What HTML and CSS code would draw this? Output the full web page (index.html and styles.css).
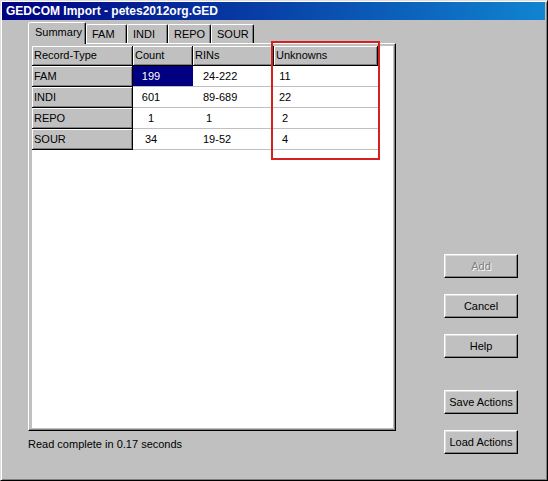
FILE: index.html
```html
<!DOCTYPE html>
<html>
  <head>
    <title>GEDCOM Import</title>
    <meta charset="utf-8" />
    <link rel="stylesheet" href="styles.css">
  </head>

  <body>
    <div class="window">
      <div class="titlebar">GEDCOM Import - petes2012org.GED</div>

      <div class="content">
        <div class="main">
          <!-- tab strip -->
          <div class="tabs">
            <div class="tab active">Summary</div>
            <div class="tab w41">FAM</div>
            <div class="tab w41">INDI</div>
            <div class="tab w43">REPO</div>
            <div class="tab w43">SOUR</div>
          </div>

          <div class="panel">
            <div class="grid">
              <div class="fixed">Record-Type</div>
              <div class="fixed">Count</div>
              <div class="fixed">RINs</div>
              <div class="fixed">Unknowns</div>

              <div class="fixed row">FAM</div>
              <div class="cell count selected"><span>199</span></div>
              <div class="cell rins">24-222</div>
              <div class="cell unk"><span>11</span></div>

              <div class="fixed row">INDI</div>
              <div class="cell count"><span>601</span></div>
              <div class="cell rins">89-689</div>
              <div class="cell unk"><span>22</span></div>

              <div class="fixed row">REPO</div>
              <div class="cell count"><span>1</span></div>
              <div class="cell rins">&nbsp;1</div>
              <div class="cell unk"><span>2</span></div>

              <div class="fixed row">SOUR</div>
              <div class="cell count"><span>34</span></div>
              <div class="cell rins">19-52</div>
              <div class="cell unk"><span>4</span></div>
            </div>
          </div>

          <div class="status">Read complete in 0.17 seconds</div>
        </div>

        <div class="buttons">
          <button disabled>Add</button>
          <button>Cancel</button>
          <button>Help</button>
          <button class="gap">Save Actions</button>
          <button>Load Actions</button>
        </div>
      </div>

      <!-- annotation over the Unknowns column -->
      <div class="highlight"></div>
    </div>
  </body>
</html>
```

FILE: styles.css
```css
body {
  margin: 0;
  font-family: 'Liberation Sans', Arial, sans-serif;
  font-size: 11px;
  color: #000;
  background: #c0c0c0;
}
.window {
  position: relative;
  box-sizing: border-box;
  width: 548px;
  height: 481px;
  background: #c0c0c0;
  border: 1px solid;
  border-color: #dfdfdf #000 #000 #dfdfdf;
  box-shadow: inset 1px 1px #fff, inset -1px -1px #808080;
  padding: 1px 2px 0 1px;
}
.titlebar {
  height: 18px;
  line-height: 19px;
  padding-left: 4px;
  background: linear-gradient(to right, #000080, #1084d0);
  color: #fff;
  font-size: 12px;
  font-weight: bold;
  white-space: nowrap;
}
.content {
  display: flex;
  padding: 2px 0 0 26px;
}
.main {
  width: 368px;
}
.tabs {
  display: flex;
  align-items: flex-end;
  height: 21px;
  position: relative;
  z-index: 1;
}
.tab {
  box-sizing: border-box;
  height: 19px;
  line-height: 18px;
  padding-left: 5px;
  border-top: 1px solid #fff;
  border-left: 1px solid #fff;
  border-right: 1px solid #000;
  border-top-left-radius: 2px;
  border-top-right-radius: 2px;
  box-shadow: inset -1px 0 #808080;
}
.tab.active {
  width: 58px;
  height: 22px;
  margin-bottom: -1px;
  padding-left: 6px;
  line-height: 19px;
  background: #c0c0c0;
}
.w41 { width: 41px; }
.w43 { width: 43px; }
.panel {
  box-sizing: border-box;
  height: 388px;
  border-top: 1px solid #fff;
  border-left: 1px solid #fff;
  border-right: 1px solid #000;
  border-bottom: 1px solid #000;
  box-shadow: inset -1px -1px #808080;
  padding: 2px 2px 2px 3px;
}
.grid {
  display: grid;
  grid-template-columns: 101px 60px 81px 104px;
  grid-auto-rows: 21px;
  grid-template-rows: 20px;
  align-content: start;
  height: 100%;
  background: #fff;
}
.grid > div {
  box-sizing: border-box;
  white-space: nowrap;
  overflow: hidden;
}
.fixed {
  background: #c0c0c0;
  border-right: 1px solid #000;
  border-bottom: 1px solid #000;
  box-shadow: inset 1px 1px #fff, inset -1px -1px #808080;
  padding-left: 2px;
  line-height: 19px;
}
.fixed.row {
  line-height: 20px;
}
.cell {
  border-bottom: 1px solid #c0c0c0;
  line-height: 20px;
}
.cell span {
  display: inline-block;
  text-align: center;
}
.count span {
  width: 36px;
}
.rins {
  padding-left: 10px;
}
.unk {
  padding-left: 4px;
}
.unk span {
  width: 14px;
}
.selected {
  background: #000080;
  color: #fff;
}
.status {
  margin-top: 6px;
  line-height: 14px;
}
.buttons {
  display: flex;
  flex-direction: column;
  gap: 16px;
  margin-left: 48px;
  padding-top: 232px;
}
button {
  box-sizing: border-box;
  width: 74px;
  height: 24px;
  padding: 0;
  font-family: inherit;
  font-size: 11px;
  color: #000;
  background: #c0c0c0;
  border: 1px solid;
  border-color: #fff #000 #000 #fff;
  box-shadow: inset -1px -1px #808080, inset 1px 1px #dfdfdf;
}
button:disabled {
  color: #808080;
  text-shadow: 1px 1px #fff;
}
button.gap {
  margin-top: 16px;
}
.highlight {
  position: absolute;
  left: 270px;
  top: 40px;
  width: 109px;
  height: 119px;
  box-sizing: border-box;
  border: 2px solid #d42020;
}
```
